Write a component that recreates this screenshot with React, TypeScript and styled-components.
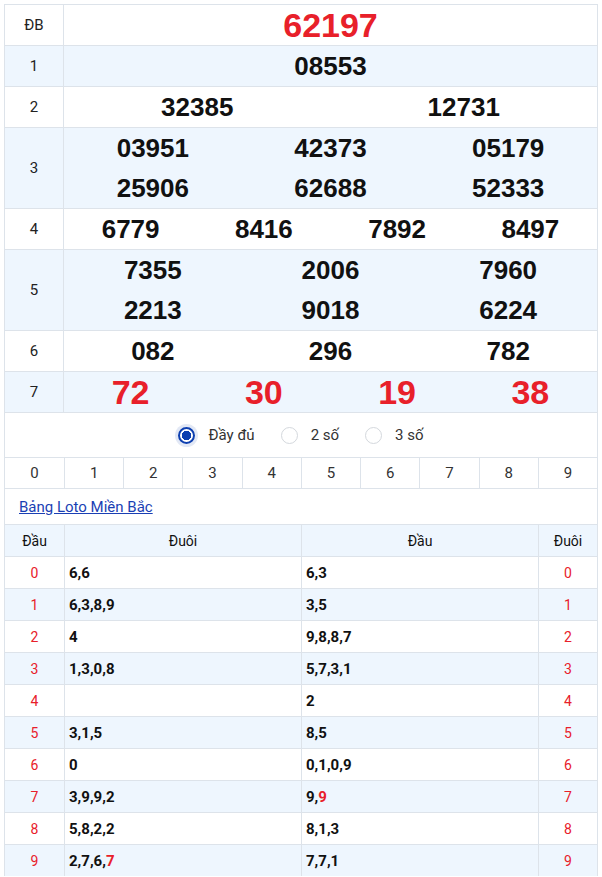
import React from 'react'
import styled, { createGlobalStyle } from 'styled-components'

const Global = createGlobalStyle`
  body { margin: 0; background: #fff; font-family: Roboto, "Noto Sans", sans-serif; }
`

const prizes: { label: string; nums: string[]; cols: number; red?: boolean; big?: boolean }[] = [
  { label: 'ĐB', nums: ['62197'], cols: 1, red: true, big: true },
  { label: '1', nums: ['08553'], cols: 1 },
  { label: '2', nums: ['32385', '12731'], cols: 2 },
  { label: '3', nums: ['03951', '42373', '05179', '25906', '62688', '52333'], cols: 3 },
  { label: '4', nums: ['6779', '8416', '7892', '8497'], cols: 4 },
  { label: '5', nums: ['7355', '2006', '7960', '2213', '9018', '6224'], cols: 3 },
  { label: '6', nums: ['082', '296', '782'], cols: 3 },
  { label: '7', nums: ['72', '30', '19', '38'], cols: 4, red: true, big: true },
]

type Part = { t: string; red?: boolean }
const loto: [Part[], Part[]][] = [
  [[{ t: '6,6' }], [{ t: '6,3' }]],
  [[{ t: '6,3,8,9' }], [{ t: '3,5' }]],
  [[{ t: '4' }], [{ t: '9,8,8,7' }]],
  [[{ t: '1,3,0,8' }], [{ t: '5,7,3,1' }]],
  [[], [{ t: '2' }]],
  [[{ t: '3,1,5' }], [{ t: '8,5' }]],
  [[{ t: '0' }], [{ t: '0,1,0,9' }]],
  [[{ t: '3,9,9,2' }], [{ t: '9,' }, { t: '9', red: true }]],
  [[{ t: '5,8,2,2' }], [{ t: '8,1,3' }]],
  [[{ t: '2,7,6,' }, { t: '7', red: true }], [{ t: '7,7,1' }]],
]

const Page = styled.div`
  width: 592px;
  margin: 4px 0 0 4px;
  border-left: 1px solid #dde3ea;
  border-right: 1px solid #dde3ea;
`

const Row = styled.div<{ $alt?: boolean }>`
  display: grid;
  grid-template-columns: 59px 1fr;
  background: ${(p) => (p.$alt ? '#eef6fe' : '#fff')};
  border-top: 1px solid #dde3ea;
`

const Label = styled.div`
  display: flex;
  align-items: center;
  justify-content: center;
  font-size: 15px;
  color: #222;
  border-right: 1px solid #dde3ea;
`

const Nums = styled.div<{ $cols: number }>`
  display: grid;
  grid-template-columns: repeat(${(p) => p.$cols}, 1fr);
`

const Num = styled.div<{ $red?: boolean; $big?: boolean }>`
  height: 40px;
  display: flex;
  align-items: center;
  justify-content: center;
  font-family: "Liberation Sans", Arial, sans-serif;
  font-weight: 700;
  font-size: ${(p) => (p.$big ? '34px' : '26px')};
  color: ${(p) => (p.$red ? '#e8202a' : '#111')};
`

const Radios = styled.div`
  height: 44px;
  display: flex;
  align-items: center;
  justify-content: center;
  gap: 26px;
  border-top: 1px solid #dde3ea;
  font-size: 15px;
  color: #333;
`

const RadioItem = styled.label`
  display: flex;
  align-items: center;
  gap: 13px;
`

const Dot = styled.span<{ $on?: boolean }>`
  width: 17px;
  height: 17px;
  border-radius: 50%;
  box-sizing: border-box;
  border: ${(p) => (p.$on ? '2px solid #0d3fb0' : '1px solid #d4d8dd')};
  background: ${(p) => (p.$on ? 'radial-gradient(circle, #0d3fb0 0 4.5px, #fff 5px)' : '#fff')};
  box-shadow: ${(p) => (p.$on ? '0 0 0 3px rgba(13,63,176,0.12)' : 'none')};
`

const Digits = styled.div`
  display: grid;
  grid-template-columns: 59px repeat(9, 1fr);
  border-top: 1px solid #dde3ea;
  border-bottom: 1px solid #dde3ea;
`

const Digit = styled.div`
  height: 30px;
  display: flex;
  align-items: center;
  justify-content: center;
  font-size: 15px;
  color: #333;
  & + & { border-left: 1px solid #dde3ea; }
`

const LinkRow = styled.div`
  height: 35px;
  display: flex;
  align-items: center;
  padding-left: 14px;
`

const Link = styled.a`
  color: #1a3fb4;
  font-size: 15px;
  text-decoration: underline;
`

const LotoRow = styled.div<{ $alt?: boolean }>`
  display: grid;
  grid-template-columns: 59px 1fr 1fr 59px;
  height: 31px;
  background: ${(p) => (p.$alt ? '#eef6fe' : '#fff')};
  border-top: 1px solid #dde3ea;
`

const Cell = styled.div<{ $center?: boolean; $red?: boolean; $head?: boolean }>`
  display: flex;
  align-items: center;
  justify-content: ${(p) => (p.$center ? 'center' : 'flex-start')};
  padding-left: ${(p) => (p.$center ? '0' : '4px')};
  font-size: ${(p) => (p.$center ? '14px' : '15px')};
  font-weight: ${(p) => (p.$center || p.$head ? 400 : 700)};
  color: ${(p) => (p.$red ? '#e8202a' : p.$head ? '#333' : '#111')};
  & + & { border-left: 1px solid #dde3ea; }
`

const Red = styled.span`
  color: #e8202a;
`

export default function App() {
  return (
    <Page>
      <Global />
      {prizes.map((p, i) => (
        <Row key={p.label} $alt={i % 2 === 1}>
          <Label>{p.label}</Label>
          <Nums $cols={p.cols}>
            {p.nums.map((n, j) => (
              <Num key={j} $red={p.red} $big={p.big}>{n}</Num>
            ))}
          </Nums>
        </Row>
      ))}
      <Radios>
        <RadioItem><Dot $on />Đầy đủ</RadioItem>
        <RadioItem><Dot />2 số</RadioItem>
        <RadioItem><Dot />3 số</RadioItem>
      </Radios>
      <Digits>
        {Array.from({ length: 10 }, (_, i) => <Digit key={i}>{i}</Digit>)}
      </Digits>
      <LinkRow><Link href="#">Bảng Loto Miền Bắc</Link></LinkRow>
      <LotoRow $alt>
        <Cell $center>Đầu</Cell>
        <Cell $center>Đuôi</Cell>
        <Cell $center>Đầu</Cell>
        <Cell $center>Đuôi</Cell>
      </LotoRow>
      {loto.map(([a, b], i) => (
        <LotoRow key={i} $alt={i % 2 === 1}>
          <Cell $center $red>{i}</Cell>
          <Cell>{a.map((x, k) => (x.red ? <Red key={k}>{x.t}</Red> : <span key={k}>{x.t}</span>))}</Cell>
          <Cell>{b.map((x, k) => (x.red ? <Red key={k}>{x.t}</Red> : <span key={k}>{x.t}</span>))}</Cell>
          <Cell $center $red>{i}</Cell>
        </LotoRow>
      ))}
    </Page>
  )
}
